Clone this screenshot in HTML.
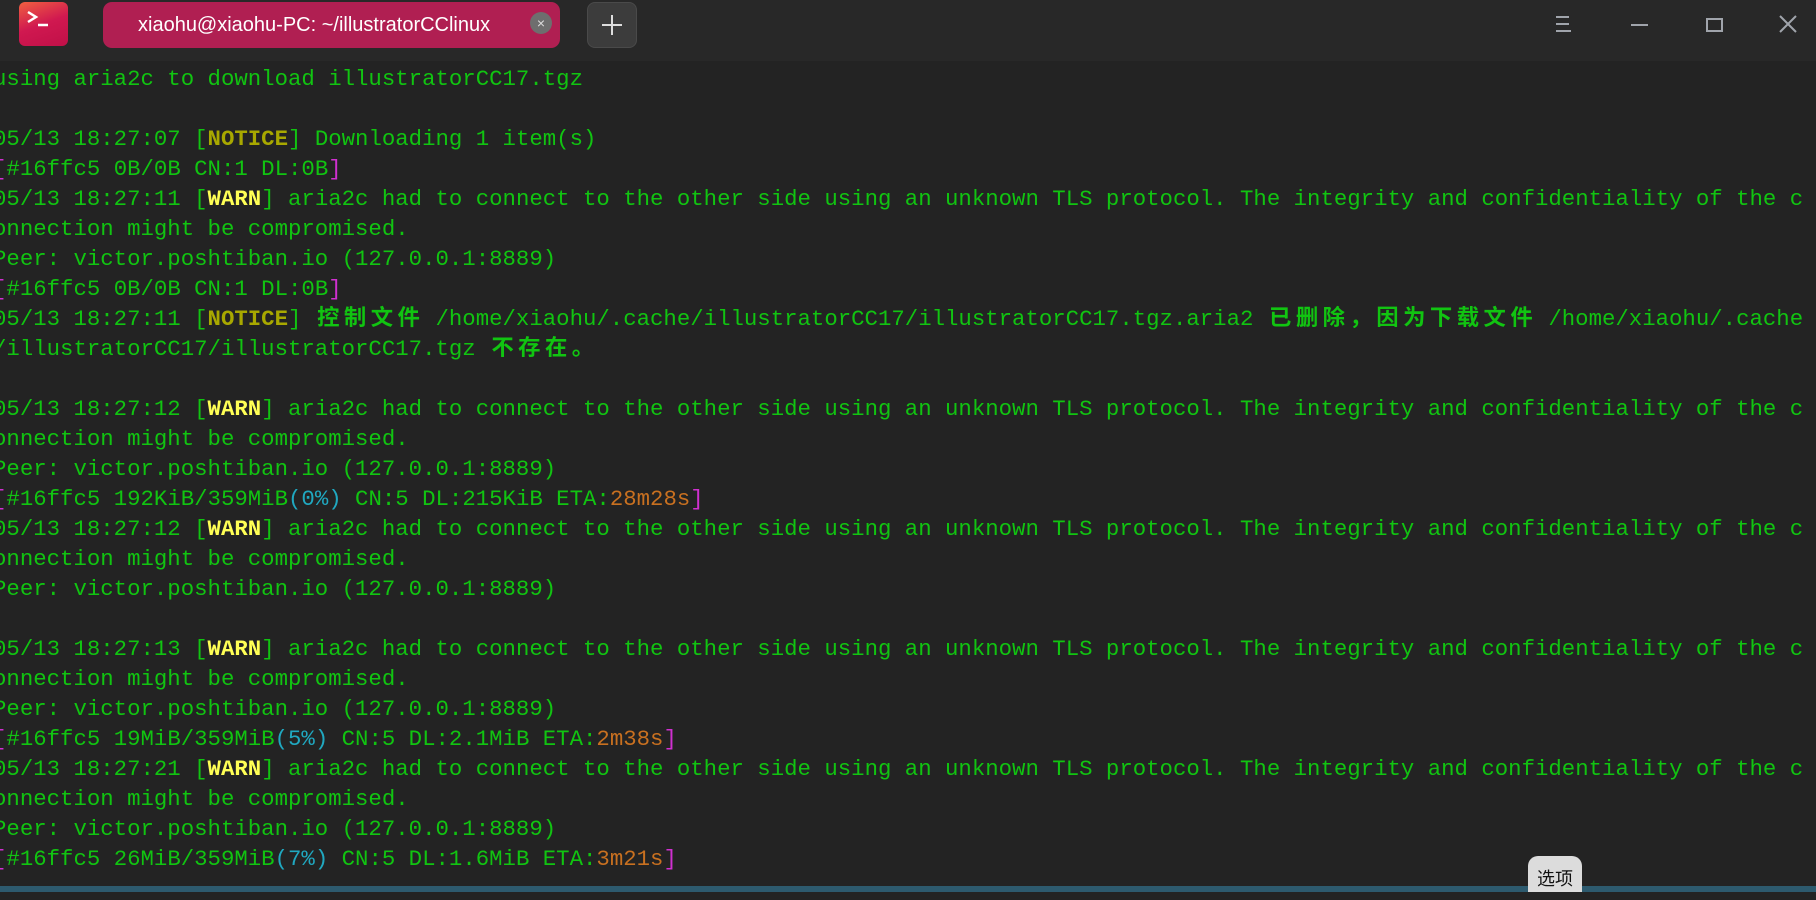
<!DOCTYPE html>
<html><head><meta charset="utf-8"><style>
html,body{margin:0;padding:0;}
body{width:1816px;height:892px;background:#232323;position:relative;overflow:hidden;font-family:"Liberation Sans","Noto Sans CJK SC",sans-serif;}
.bar{position:absolute;left:0;top:0;width:1816px;height:61px;background:#282828;}
.logo{position:absolute;left:19px;top:2px;width:49px;height:44px;border-radius:6px;background:linear-gradient(160deg,#f06040,#d01850 50%,#c01048);}
.tab{position:absolute;left:103px;top:2px;width:457px;height:46px;border-radius:9px;background:#b01f52;color:#fff;font-size:20px;line-height:46px;}
.tab span{position:absolute;left:35px;}
.cls{position:absolute;left:530px;top:12px;width:22px;height:22px;border-radius:50%;background:#6e6e6e;color:#ddd;font-size:14px;line-height:22px;text-align:center;}
.plus{position:absolute;left:587px;top:2px;width:50px;height:46px;border-radius:8px;background:#3c3c3c;border:1px solid #4a4a4a;box-sizing:border-box;}
pre{position:absolute;left:-7px;top:64px;margin:0;font-family:"Liberation Mono","Noto Sans CJK SC",monospace;font-size:22.35px;line-height:30px;color:#11c411;white-space:pre;}
.n{color:#a8a800;font-weight:bold}.w{color:#ffff55;font-weight:bold}.m{color:#d030d0}.c{color:#20a8c0}.o{color:#c87020}
.z{display:inline-block;width:2ch;text-align:center;font-weight:bold}
.opt{position:absolute;left:1528px;top:856px;width:54px;height:36px;background:#dcdcdc;border-radius:10px 10px 0 0;font-size:18px;line-height:44px;text-align:center;color:#111;font-family:"Noto Sans CJK SC",sans-serif;}
.bot{position:absolute;left:0;top:886px;width:1816px;height:6px;background:#2d5a6e;}
</style></head><body>
<div class="bar"></div>
<div class="logo"><svg width="49" height="44"><path d="M9 10 L17 15 L9 20" stroke="#fff" stroke-width="2.5" fill="none"/><path d="M19 23 H29" stroke="#fff" stroke-width="2.5"/></svg></div>
<div class="tab"><span>xiaohu@xiaohu-PC: ~/illustratorCClinux</span></div>
<div class="cls" style="left:530px">×</div>
<div class="plus"><svg width="48" height="44"><path d="M24 12 V32 M14 22 H34" stroke="#ddd" stroke-width="2"/></svg></div>
<svg style="position:absolute;left:1540px;top:10px" width="276" height="32">
<path d="M16 7 H29 M16 14 H29 M16 21 H31" stroke="#a0a4ab" stroke-width="2"/>
<path d="M91 15 H108" stroke="#a0a4ab" stroke-width="2"/>
<rect x="167" y="9" width="15" height="12" stroke="#a0a4ab" stroke-width="2" fill="none"/>
<path d="M240 6 L256 22 M256 6 L240 22" stroke="#a0a4ab" stroke-width="2"/>
</svg>
<pre>using aria2c to download illustratorCC17.tgz

05/13 18:27:07 [<span class="n">NOTICE</span>] Downloading 1 item(s)
<span class="m">[</span>#16ffc5 0B/0B CN:1 DL:0B<span class="m">]</span>
05/13 18:27:11 [<span class="w">WARN</span>] aria2c had to connect to the other side using an unknown TLS protocol. The integrity and confidentiality of the c
onnection might be compromised.
Peer: victor.poshtiban.io (127.0.0.1:8889)
<span class="m">[</span>#16ffc5 0B/0B CN:1 DL:0B<span class="m">]</span>
05/13 18:27:11 [<span class="n">NOTICE</span>] <span class="z">控</span><span class="z">制</span><span class="z">文</span><span class="z">件</span> /home/xiaohu/.cache/illustratorCC17/illustratorCC17.tgz.aria2 <span class="z">已</span><span class="z">删</span><span class="z">除</span><span class="z">，</span><span class="z">因</span><span class="z">为</span><span class="z">下</span><span class="z">载</span><span class="z">文</span><span class="z">件</span> /home/xiaohu/.cache
/illustratorCC17/illustratorCC17.tgz <span class="z">不</span><span class="z">存</span><span class="z">在</span><span class="z">。</span>

05/13 18:27:12 [<span class="w">WARN</span>] aria2c had to connect to the other side using an unknown TLS protocol. The integrity and confidentiality of the c
onnection might be compromised.
Peer: victor.poshtiban.io (127.0.0.1:8889)
<span class="m">[</span>#16ffc5 192KiB/359MiB<span class="c">(0%)</span> CN:5 DL:215KiB ETA:<span class="o">28m28s</span><span class="m">]</span>
05/13 18:27:12 [<span class="w">WARN</span>] aria2c had to connect to the other side using an unknown TLS protocol. The integrity and confidentiality of the c
onnection might be compromised.
Peer: victor.poshtiban.io (127.0.0.1:8889)

05/13 18:27:13 [<span class="w">WARN</span>] aria2c had to connect to the other side using an unknown TLS protocol. The integrity and confidentiality of the c
onnection might be compromised.
Peer: victor.poshtiban.io (127.0.0.1:8889)
<span class="m">[</span>#16ffc5 19MiB/359MiB<span class="c">(5%)</span> CN:5 DL:2.1MiB ETA:<span class="o">2m38s</span><span class="m">]</span>
05/13 18:27:21 [<span class="w">WARN</span>] aria2c had to connect to the other side using an unknown TLS protocol. The integrity and confidentiality of the c
onnection might be compromised.
Peer: victor.poshtiban.io (127.0.0.1:8889)
<span class="m">[</span>#16ffc5 26MiB/359MiB<span class="c">(7%)</span> CN:5 DL:1.6MiB ETA:<span class="o">3m21s</span><span class="m">]</span></pre>
<div class="bot"></div>
<div class="opt">选项</div>
</body></html>
